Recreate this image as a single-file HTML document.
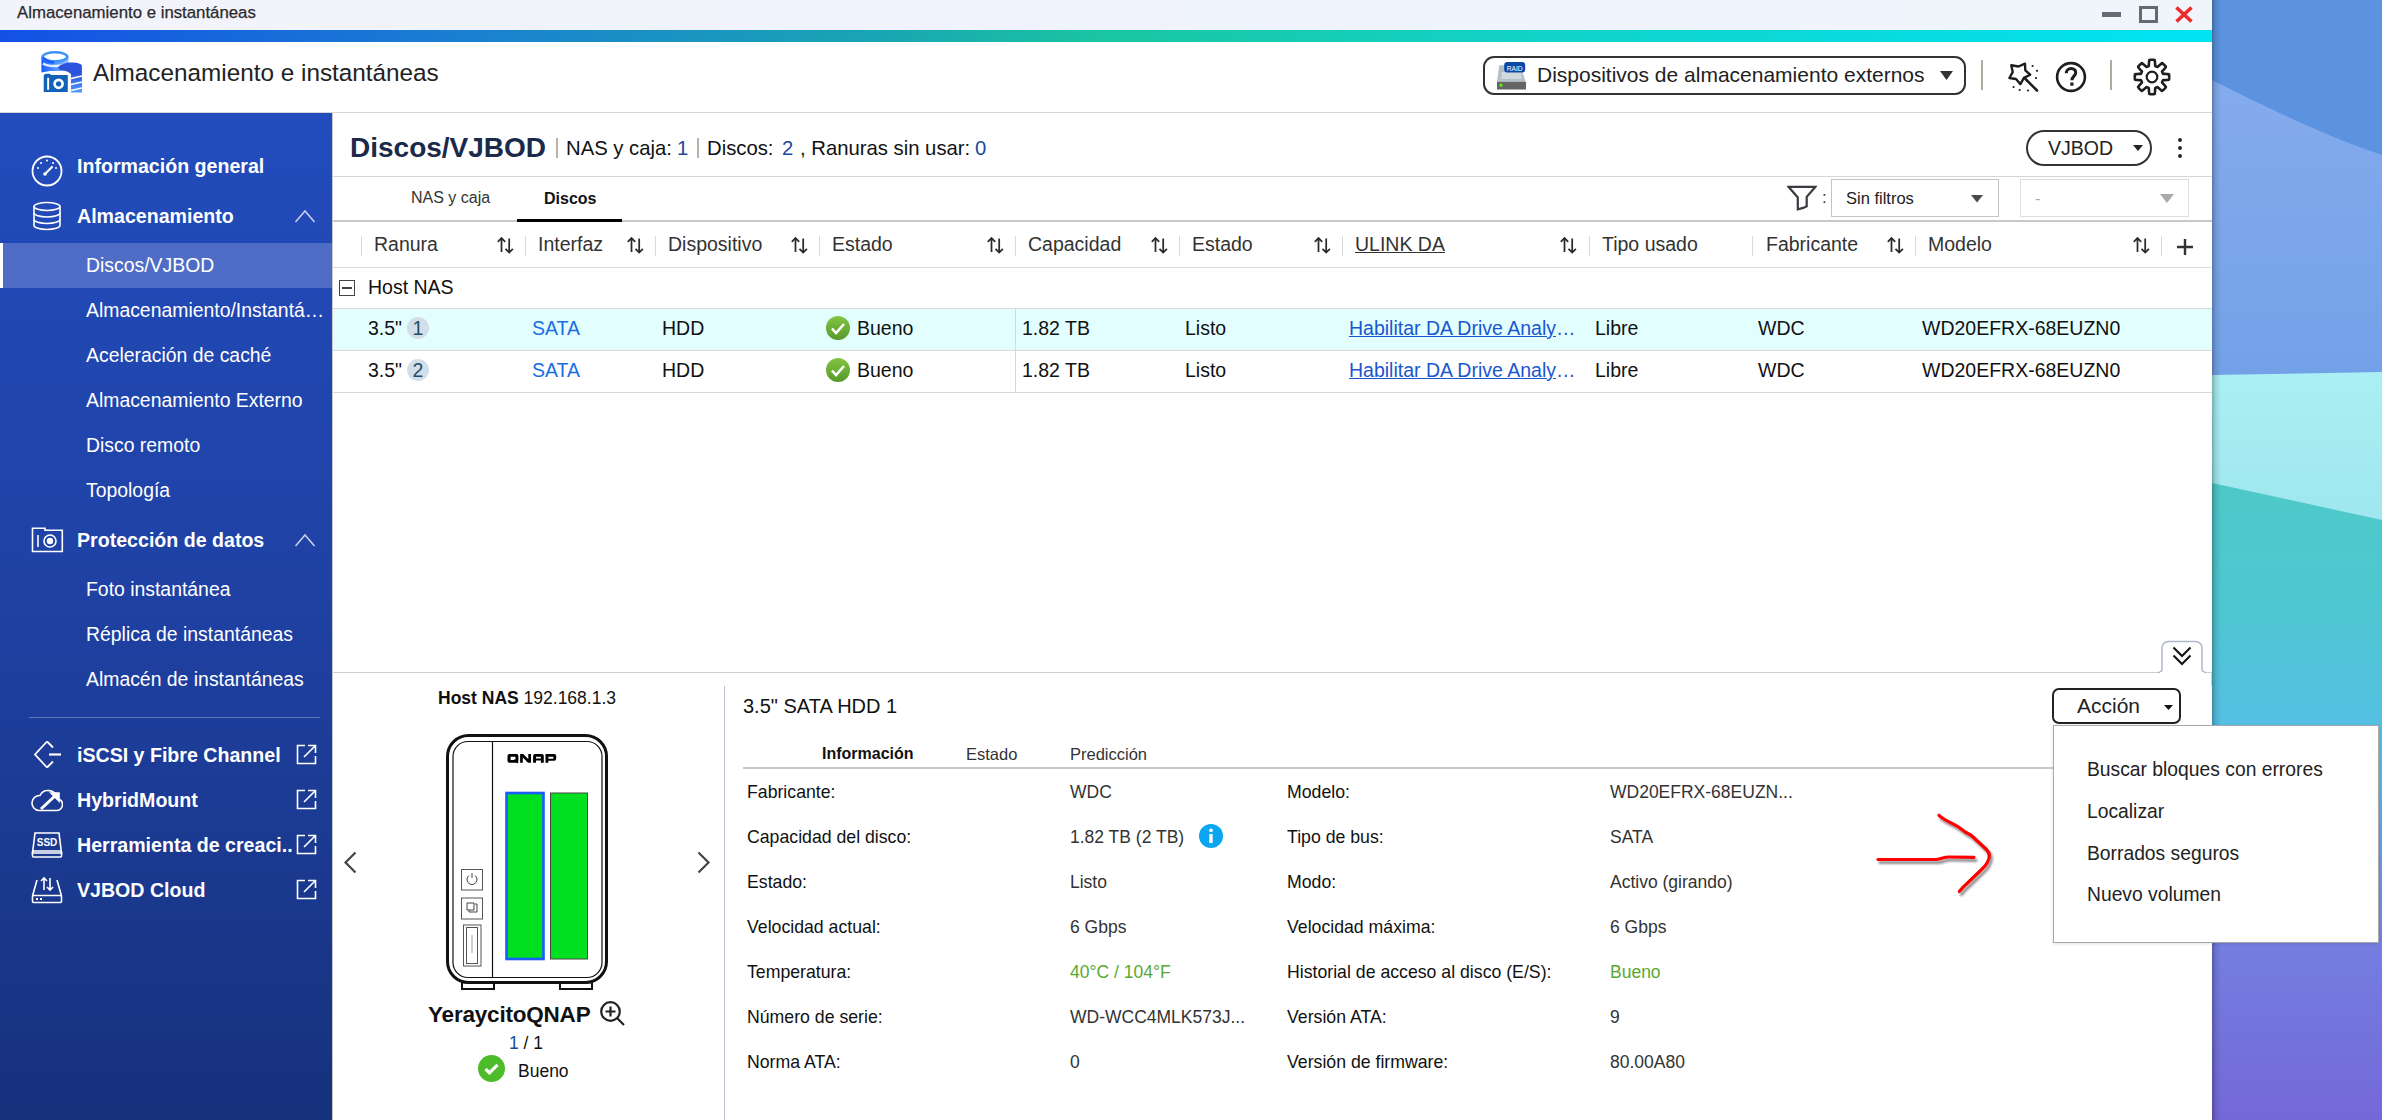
<!DOCTYPE html>
<html><head><meta charset="utf-8">
<style>
*{margin:0;padding:0;box-sizing:border-box}
html,body{width:2382px;height:1120px;overflow:hidden;font-family:"Liberation Sans",sans-serif;color:#222}
body{position:relative;background:#5b93e0}
.a{position:absolute}
.t{position:absolute;white-space:nowrap}
#wall{left:2212px;top:0;width:170px;height:1120px;overflow:hidden}
#win{left:0;top:0;width:2212px;height:1120px;background:#fff;overflow:hidden}
#titlebar{left:0;top:0;width:2212px;height:30px;background:linear-gradient(90deg,#f3f3fb 0%,#eff3fb 60%,#f0f5fc 100%)}
#grad{left:0;top:30px;width:2212px;height:12px;background:linear-gradient(90deg,#1450e6 0%,#1a82d0 22%,#19a6b2 40%,#1ac6a2 50%,#12d2c6 68%,#00e3f3 100%)}
#header{left:0;top:42px;width:2212px;height:71px;background:#fff;border-bottom:1px solid #d6d6d6}
#side{left:0;top:113px;width:332px;height:1007px;background:linear-gradient(180deg,#224cbd 0%,#1f41a3 48%,#16317c 100%)}
.sb{color:#fff;font-weight:bold;font-size:19.6px;line-height:30px}
.si{color:#fff;font-size:19.4px;line-height:30px}
.ln{position:absolute;background:#dcdcdc}
</style></head><body>
<div id="wall" class="a">
  <svg width="170" height="1120" viewBox="0 0 170 1120" style="position:absolute;left:0;top:0">
    <defs>
      <linearGradient id="wg" gradientUnits="userSpaceOnUse" x1="0" y1="480" x2="0" y2="1120">
        <stop offset="0" stop-color="#4ec9c8"/>
        <stop offset="0.2" stop-color="#4fc7d2"/>
        <stop offset="0.38" stop-color="#55c0e3"/>
        <stop offset="0.72" stop-color="#747fe0"/>
        <stop offset="1" stop-color="#7468d8"/>
      </linearGradient>
      <linearGradient id="wb" gradientUnits="userSpaceOnUse" x1="0" y1="80" x2="0" y2="375"><stop offset="0" stop-color="#84abed"/><stop offset="1" stop-color="#73a1e8"/></linearGradient>
      <linearGradient id="wc" gradientUnits="userSpaceOnUse" x1="0" y1="375" x2="0" y2="520"><stop offset="0" stop-color="#aaeff3"/><stop offset="1" stop-color="#9fe6ee"/></linearGradient>
    </defs>
    <rect x="0" y="0" width="170" height="1120" fill="url(#wg)"/>
    <polygon points="0,0 170,0 170,520 0,483" fill="url(#wc)"/>
    <polygon points="0,0 170,0 170,372 0,375" fill="url(#wb)"/>
    <path d="M0 0H170V155C110 135 50 105 0 80z" fill="#5b93e0"/>
  </svg>
</div>
<div class="a" style="left:2212px;top:0;width:9px;height:1120px;background:linear-gradient(90deg,rgba(0,0,0,.28),rgba(0,0,0,.1) 40%,rgba(0,0,0,0))"></div>
<div id="win" class="a">
  <div id="titlebar" class="a"></div>
  <div class="t" style="left:17px;top:3px;font-size:16.8px;line-height:20px;color:#2a2a2a;-webkit-text-stroke:0.25px #2a2a2a">Almacenamiento e instantáneas</div>
  <div id="grad" class="a"></div>
  <div id="header" class="a"></div>
  <div class="t" style="left:93px;top:58px;font-size:24.3px;line-height:30px;color:#222">Almacenamiento e instantáneas</div>

  <!-- window controls -->
  <div class="a" style="left:2102px;top:12px;width:19px;height:5px;background:#646a72"></div>
  <div class="a" style="left:2139px;top:6px;width:19px;height:17px;border:3.5px solid #646a72"></div>
  <svg class="a" style="left:2174px;top:5px" width="20" height="19" viewBox="0 0 20 19"><path d="M2.5 2.5l15 14M17.5 2.5l-15 14" stroke="#ee2b2b" stroke-width="3.6"/></svg>
  <!-- logo -->
  <svg class="a" style="left:40px;top:50px" width="44" height="44" viewBox="0 0 44 44">
    <defs>
      <linearGradient id="lg2" x1="0" y1="0" x2="0" y2="1"><stop offset="0" stop-color="#2a55e0"/><stop offset="1" stop-color="#4d9bff"/></linearGradient>
      <linearGradient id="lg3" x1="0" y1="0" x2="1" y2="0"><stop offset="0" stop-color="#1a5cff"/><stop offset="0.6" stop-color="#5a9cff"/><stop offset="1" stop-color="#9cc4ff"/></linearGradient>
    </defs>
    <path d="M1.4 6.8V22.5L10 21l18.5 0V6.8z" fill="url(#lg3)"/>
    <path d="M3 13.5c5 3.2 18 3.4 25 0.5" stroke="#fff" stroke-width="2.6" fill="none" opacity=".85"/>
    <ellipse cx="15" cy="6.8" rx="12.3" ry="4.5" fill="#fff" stroke="#3d94ff" stroke-width="2.6"/>
    <path d="M2.7 7.5C6 10 9 13 14 12.2" stroke="#1a5cff" stroke-width="2.4" fill="none"/>
    <path d="M31 23.5v19h11v-19z" fill="url(#lg2)"/>
    <path d="M31 28.5l11-2.5M31 34.5l11-2.5M31 40.5l11-2.5" stroke="#fff" stroke-width="1.4" fill="none"/>
    <path d="M17.7 18c2-3.5 8-5.4 14-5.4s10 1.5 10.2 3.2V23.7c-3 0.8-6 1-10.7 0.5C28 21 24 20 20 20z" fill="#2d52dc"/>
    <path d="M2.9 26a3 3 0 0 1 3-3h3.5a2 2 0 0 1 2 1.2h16.2a1 1 0 0 1 1 1v17.6H2.9z" fill="#1262b8" stroke="#fff" stroke-width="1.6"/>
    <rect x="7.2" y="27.8" width="1.9" height="12" fill="#fff"/>
    <circle cx="18.6" cy="33.8" r="4" fill="none" stroke="#fff" stroke-width="2.7"/>
  </svg>
  <!-- header dropdown -->
  <div class="a" style="left:1483px;top:56px;width:483px;height:39px;border:2px solid #333;border-radius:11px"></div>
  <svg class="a" style="left:1496px;top:61px" width="32" height="29" viewBox="0 0 32 29">
    <path d="M3.2 4.2h20.8l5.8 16.8H1z" fill="#b3bfc7"/>
    <path d="M5.9 10.9h18.9l1 7.1H5z" fill="#d0d8de"/>
    <rect x="1" y="20.9" width="29" height="7.6" fill="#646464"/>
    <rect x="3.7" y="22.8" width="2.6" height="2.8" fill="#66ff00"/>
    <rect x="8.2" y="1" width="21" height="10.6" rx="3" fill="#0a4aa6"/>
    <text x="18.7" y="9.6" font-family="Liberation Sans" font-size="8" fill="#fff" text-anchor="middle" textLength="16" lengthAdjust="spacingAndGlyphs">RAID</text>
  </svg>
  <div class="t" style="left:1537px;top:59.5px;font-size:21px;line-height:30px;color:#222">Dispositivos de almacenamiento externos</div>
  <svg class="a" style="left:1940px;top:71px" width="13" height="9" viewBox="0 0 13 9"><path d="M0 0h13L6.5 9z" fill="#333"/></svg>
  <div class="a" style="left:1981px;top:60px;width:2px;height:30px;background:#b1ab9f"></div>
  <div class="a" style="left:2110px;top:60px;width:2px;height:30px;background:#b1ab9f"></div>
  <!-- wand -->
  <svg class="a" style="left:2005px;top:59px" width="36" height="36" viewBox="0 0 36 36" fill="none" stroke="#1e1e1e" stroke-width="2.4" stroke-linejoin="round">
    <path d="M6.3 6.2 L13.5 7.5 L20.0 4.7 L20.3 11.3 L25.2 15.7 L18.9 18.9 L15.4 25.1 L11.0 20.0 L4.4 19.0 L7.7 13.1z"/>
    <path d="M20 19.5l12 12" stroke-linecap="round" stroke-width="2.6"/>
    <circle cx="27.6" cy="7" r="1.1" fill="#1e1e1e" stroke="none"/><circle cx="32" cy="11.8" r="1.1" fill="#1e1e1e" stroke="none"/><circle cx="31" cy="19" r="1.1" fill="#1e1e1e" stroke="none"/>
    <circle cx="8.6" cy="28" r="1.1" fill="#1e1e1e" stroke="none"/><circle cx="14.7" cy="31" r="1.1" fill="#1e1e1e" stroke="none"/><circle cx="23" cy="31.5" r="1.1" fill="#1e1e1e" stroke="none"/>
  </svg>
  <!-- help -->
  <svg class="a" style="left:2055px;top:61px" width="32" height="32" viewBox="0 0 32 32" fill="none" stroke="#1e1e1e" stroke-width="2.6">
    <circle cx="16" cy="16" r="13.9"/>
    <path d="M11.3 12.3c0-3 2.2-4.8 4.8-4.8 2.8 0 4.6 1.8 4.6 4.2 0 3.3-3.8 3.6-3.8 7.6" stroke-width="3"/>
    <rect x="15.3" y="21.5" width="3.2" height="3.2" fill="#1e1e1e" stroke="none"/>
  </svg>
  <!-- gear -->
  <svg class="a" style="left:2133px;top:58px" width="38" height="38" viewBox="0 0 38 38" fill="none" stroke="#1e1e1e" stroke-width="2.6" stroke-linejoin="round">
    <path d="M36.20 19.00 L36.19 19.45 L36.18 19.90 L36.15 20.35 L36.11 20.80 L36.05 21.25 L35.99 21.69 L34.66 21.90 L33.27 22.03 L31.92 22.10 L30.66 22.12 L29.93 22.24 L29.84 22.52 L29.75 22.81 L29.64 23.09 L29.53 23.36 L29.41 23.64 L29.29 23.91 L29.16 24.18 L29.02 24.44 L29.45 25.03 L30.33 25.94 L31.24 26.95 L32.12 28.02 L32.92 29.11 L32.65 29.47 L32.37 29.82 L32.08 30.17 L31.78 30.51 L31.48 30.84 L31.16 31.16 L30.84 31.48 L30.51 31.78 L30.17 32.08 L29.82 32.37 L29.47 32.65 L29.11 32.92 L28.02 32.12 L26.95 31.24 L25.94 30.33 L25.03 29.45 L24.44 29.02 L24.18 29.16 L23.91 29.29 L23.64 29.41 L23.36 29.53 L23.09 29.64 L22.81 29.75 L22.52 29.84 L22.24 29.93 L22.12 30.66 L22.10 31.92 L22.03 33.27 L21.90 34.66 L21.69 35.99 L21.25 36.05 L20.80 36.11 L20.35 36.15 L19.90 36.18 L19.45 36.19 L19.00 36.20 L18.55 36.19 L18.10 36.18 L17.65 36.15 L17.20 36.11 L16.75 36.05 L16.31 35.99 L16.10 34.66 L15.97 33.27 L15.90 31.92 L15.88 30.66 L15.76 29.93 L15.48 29.84 L15.19 29.75 L14.91 29.64 L14.64 29.53 L14.36 29.41 L14.09 29.29 L13.82 29.16 L13.56 29.02 L12.97 29.45 L12.06 30.33 L11.05 31.24 L9.98 32.12 L8.89 32.92 L8.53 32.65 L8.18 32.37 L7.83 32.08 L7.49 31.78 L7.16 31.48 L6.84 31.16 L6.52 30.84 L6.22 30.51 L5.92 30.17 L5.63 29.82 L5.35 29.47 L5.08 29.11 L5.88 28.02 L6.76 26.95 L7.67 25.94 L8.55 25.03 L8.98 24.44 L8.84 24.18 L8.71 23.91 L8.59 23.64 L8.47 23.36 L8.36 23.09 L8.25 22.81 L8.16 22.52 L8.07 22.24 L7.34 22.12 L6.08 22.10 L4.73 22.03 L3.34 21.90 L2.01 21.69 L1.95 21.25 L1.89 20.80 L1.85 20.35 L1.82 19.90 L1.81 19.45 L1.80 19.00 L1.81 18.55 L1.82 18.10 L1.85 17.65 L1.89 17.20 L1.95 16.75 L2.01 16.31 L3.34 16.10 L4.73 15.97 L6.08 15.90 L7.34 15.88 L8.07 15.76 L8.16 15.48 L8.25 15.19 L8.36 14.91 L8.47 14.64 L8.59 14.36 L8.71 14.09 L8.84 13.82 L8.98 13.56 L8.55 12.97 L7.67 12.06 L6.76 11.05 L5.88 9.98 L5.08 8.89 L5.35 8.53 L5.63 8.18 L5.92 7.83 L6.22 7.49 L6.52 7.16 L6.84 6.84 L7.16 6.52 L7.49 6.22 L7.83 5.92 L8.18 5.63 L8.53 5.35 L8.89 5.08 L9.98 5.88 L11.05 6.76 L12.06 7.67 L12.97 8.55 L13.56 8.98 L13.82 8.84 L14.09 8.71 L14.36 8.59 L14.64 8.47 L14.91 8.36 L15.19 8.25 L15.48 8.16 L15.76 8.07 L15.88 7.34 L15.90 6.08 L15.97 4.73 L16.10 3.34 L16.31 2.01 L16.75 1.95 L17.20 1.89 L17.65 1.85 L18.10 1.82 L18.55 1.81 L19.00 1.80 L19.45 1.81 L19.90 1.82 L20.35 1.85 L20.80 1.89 L21.25 1.95 L21.69 2.01 L21.90 3.34 L22.03 4.73 L22.10 6.08 L22.12 7.34 L22.24 8.07 L22.52 8.16 L22.81 8.25 L23.09 8.36 L23.36 8.47 L23.64 8.59 L23.91 8.71 L24.18 8.84 L24.44 8.98 L25.03 8.55 L25.94 7.67 L26.95 6.76 L28.02 5.88 L29.11 5.08 L29.47 5.35 L29.82 5.63 L30.17 5.92 L30.51 6.22 L30.84 6.52 L31.16 6.84 L31.48 7.16 L31.78 7.49 L32.08 7.83 L32.37 8.18 L32.65 8.53 L32.92 8.89 L32.12 9.98 L31.24 11.05 L30.33 12.06 L29.45 12.97 L29.02 13.56 L29.16 13.82 L29.29 14.09 L29.41 14.36 L29.53 14.64 L29.64 14.91 L29.75 15.19 L29.84 15.48 L29.93 15.76 L30.66 15.88 L31.92 15.90 L33.27 15.97 L34.66 16.10 L35.99 16.31 L36.05 16.75 L36.11 17.20 L36.15 17.65 L36.18 18.10 L36.19 18.55 L36.20 19.00Z"/>
    <circle cx="19" cy="19" r="5.3" stroke-width="2.2"/>
  </svg>
  <div id="side" class="a"></div>

  <div class="a" style="left:0;top:243px;width:332px;height:45px;background:#4f6dc6"></div>
  <div class="a" style="left:0;top:243px;width:3px;height:45px;background:#fff"></div>
  <!-- icons -->
  <svg class="a" style="left:30px;top:154px" width="34" height="34" viewBox="0 0 34 34" fill="none" stroke="#fff" stroke-width="1.8">
    <circle cx="17" cy="17" r="14.5"/>
    <line x1="15" y1="20" x2="22" y2="13" stroke-width="2.2" stroke-linecap="round"/>
    <circle cx="15" cy="20" r="1.8" fill="#fff" stroke="none"/>
    <circle cx="8" cy="14" r="1" fill="#fff" stroke="none"/><circle cx="11" cy="9" r="1" fill="#fff" stroke="none"/><circle cx="17" cy="6.5" r="1" fill="#fff" stroke="none"/><circle cx="23" cy="9" r="1" fill="#fff" stroke="none"/><circle cx="26" cy="14" r="1" fill="#fff" stroke="none"/>
  </svg>
  <svg class="a" style="left:32px;top:201px" width="30" height="30" viewBox="0 0 30 30" fill="none" stroke="#fff" stroke-width="1.6">
    <ellipse cx="15" cy="5.5" rx="13" ry="4"/>
    <path d="M2 5.5v19c0 2.2 5.8 4 13 4s13-1.8 13-4v-19"/>
    <path d="M2 12c0 2.2 5.8 4 13 4s13-1.8 13-4"/>
    <path d="M2 18.5c0 2.2 5.8 4 13 4s13-1.8 13-4"/>
  </svg>
  <svg class="a" style="left:294px;top:208px" width="22" height="16" viewBox="0 0 22 16" fill="none" stroke="rgba(255,255,255,.75)" stroke-width="1.6"><path d="M1.5 14L11 3l9.5 11"/></svg>
  <svg class="a" style="left:31px;top:527px" width="33" height="26" viewBox="0 0 33 26" fill="none" stroke="#fff" stroke-width="1.6">
    <path d="M1.5 2.5V1.2h12.5v2h17.3v21.3H1.5z"/>
    <line x1="7" y1="8" x2="7" y2="20"/>
    <circle cx="19" cy="14" r="6"/><circle cx="19" cy="14" r="2.4" fill="#fff"/>
  </svg>
  <svg class="a" style="left:294px;top:532px" width="22" height="16" viewBox="0 0 22 16" fill="none" stroke="rgba(255,255,255,.75)" stroke-width="1.6"><path d="M1.5 14L11 3l9.5 11"/></svg>
  <div class="a" style="left:29px;top:717px;width:291px;height:1px;background:rgba(255,255,255,.3)"></div>
  <svg class="a" style="left:33px;top:740px" width="30" height="29" viewBox="0 0 30 29" fill="none" stroke="#fff" stroke-width="1.8">
    <path d="M14 1.5L2 14.5l12 13"/><path d="M14 1.5l6 6"/><path d="M14 27.5l6-6"/><line x1="16" y1="14.5" x2="28" y2="14.5" stroke-width="2.2"/>
  </svg>
  <svg class="a" style="left:31px;top:787px" width="32" height="25" viewBox="0 0 32 25" fill="none" stroke="#fff" stroke-width="1.6">
    <path d="M8 23.5h17a6 6 0 0 0 1-12 9 9 0 0 0-17-3 7.5 7.5 0 0 0-1 15z"/>
    <path d="M10 22l16-15" stroke-width="3"/><path d="M20 6h8v8z" fill="#fff"/>
  </svg>
  <svg class="a" style="left:31px;top:831px" width="32" height="28" viewBox="0 0 32 28" fill="none" stroke="#fff" stroke-width="1.6">
    <path d="M4 2h24l2.5 20H1.5z"/><rect x="1.5" y="20" width="29" height="6" rx="1"/>
    <text x="16" y="15" font-family="Liberation Sans" font-weight="bold" font-size="10" fill="#fff" stroke="none" text-anchor="middle">SSD</text>
  </svg>
  <svg class="a" style="left:31px;top:876px" width="32" height="28" viewBox="0 0 32 28" fill="none" stroke="#fff" stroke-width="1.6">
    <path d="M6 4L1.5 20M26 4l4.5 16"/><rect x="1.5" y="19.5" width="29" height="7" rx="1"/>
    <path d="M13 14V2M10 5l3-3 3 3M19 2v12M16 11l3 3 3-3"/>
    <rect x="5" y="22" width="2" height="2" fill="#fff" stroke="none"/><rect x="9" y="22" width="2" height="2" fill="#fff" stroke="none"/>
  </svg>
  <svg class="a" style="left:296px;top:744px" width="21" height="21" viewBox="0 0 21 21" fill="none" stroke="#fff" stroke-width="1.6"><path d="M9 1.5H1.5v18h18V12"/><path d="M8 13L19 2M12 1.5h7.5V9"/></svg>
  <svg class="a" style="left:296px;top:789px" width="21" height="21" viewBox="0 0 21 21" fill="none" stroke="#fff" stroke-width="1.6"><path d="M9 1.5H1.5v18h18V12"/><path d="M8 13L19 2M12 1.5h7.5V9"/></svg>
  <svg class="a" style="left:296px;top:834px" width="21" height="21" viewBox="0 0 21 21" fill="none" stroke="#fff" stroke-width="1.6"><path d="M9 1.5H1.5v18h18V12"/><path d="M8 13L19 2M12 1.5h7.5V9"/></svg>
  <svg class="a" style="left:296px;top:879px" width="21" height="21" viewBox="0 0 21 21" fill="none" stroke="#fff" stroke-width="1.6"><path d="M9 1.5H1.5v18h18V12"/><path d="M8 13L19 2M12 1.5h7.5V9"/></svg>
  <div class="t sb" style="left:77px;top:150.7px">Información general</div>
  <div class="t sb" style="left:77px;top:200.7px">Almacenamiento</div>
  <div class="t si" style="left:86px;top:249.8px">Discos/VJBOD</div>
  <div class="t si" style="left:86px;top:294.8px">Almacenamiento/Instantá…</div>
  <div class="t si" style="left:86px;top:339.8px">Aceleración de caché</div>
  <div class="t si" style="left:86px;top:384.8px">Almacenamiento Externo</div>
  <div class="t si" style="left:86px;top:429.8px">Disco remoto</div>
  <div class="t si" style="left:86px;top:474.8px">Topología</div>
  <div class="t sb" style="left:77px;top:524.7px">Protección de datos</div>
  <div class="t si" style="left:86px;top:573.5px">Foto instantánea</div>
  <div class="t si" style="left:86px;top:618.5px">Réplica de instantáneas</div>
  <div class="t si" style="left:86px;top:663.5px">Almacén de instantáneas</div>
  <div class="t sb" style="left:77px;top:739.8px">iSCSI y Fibre Channel</div>
  <div class="t sb" style="left:77px;top:784.8px">HybridMount</div>
  <div class="t sb" style="left:77px;top:829.8px">Herramienta de creaci..</div>
  <div class="t sb" style="left:77px;top:874.8px">VJBOD Cloud</div>

  <!-- content -->
  <div class="a" style="left:332px;top:113px;width:1px;height:1007px;background:#c9c9c9"></div>
  <div class="t" style="left:350px;top:132px;font-size:28px;line-height:32px;font-weight:bold;color:#1b2a4a">Discos/VJBOD</div>
  <div class="a" style="left:556px;top:138px;width:2px;height:20px;background:#bab3a6"></div>
  <div class="t" style="left:566px;top:133px;font-size:20.3px;line-height:30px;color:#111">NAS y caja:</div>
  <div class="t" style="left:677px;top:133px;font-size:20.3px;line-height:30px;color:#1b4a9c">1</div>
  <div class="a" style="left:697px;top:138px;width:2px;height:20px;background:#bab3a6"></div>
  <div class="t" style="left:707px;top:133px;font-size:20.3px;line-height:30px;color:#111">Discos:</div>
  <div class="t" style="left:782px;top:133px;font-size:20.3px;line-height:30px;color:#1b4a9c">2</div>
  <div class="t" style="left:800px;top:133px;font-size:20.3px;line-height:30px;color:#111">, Ranuras sin usar:</div>
  <div class="t" style="left:975px;top:133px;font-size:20.3px;line-height:30px;color:#1b4a9c">0</div>
  <!-- VJBOD pill -->
  <div class="a" style="left:2026px;top:130px;width:126px;height:36px;border:2px solid #333;border-radius:18px"></div>
  <div class="t" style="left:2048px;top:133px;font-size:19.5px;line-height:30px;color:#222">VJBOD</div>
  <svg class="a" style="left:2133px;top:145px" width="10" height="6" viewBox="0 0 10 6"><path d="M0 0h10L5 6z" fill="#222"/></svg>
  <div class="a" style="left:2177.8px;top:137.6px;width:4.4px;height:4.4px;border-radius:2.2px;background:#2a2a2a"></div>
  <div class="a" style="left:2177.8px;top:145.7px;width:4.4px;height:4.4px;border-radius:2.2px;background:#2a2a2a"></div>
  <div class="a" style="left:2177.8px;top:153.7px;width:4.4px;height:4.4px;border-radius:2.2px;background:#2a2a2a"></div>
  <div class="a" style="left:333px;top:176px;width:1879px;height:1px;background:#d6d6d6"></div>
  <!-- tabs -->
  <div class="t" style="left:411px;top:188px;font-size:16px;line-height:20px;color:#333">NAS y caja</div>
  <div class="t" style="left:544px;top:189px;font-size:16px;line-height:20px;font-weight:bold;color:#111">Discos</div>
  <div class="a" style="left:333px;top:220px;width:1879px;height:2px;background:#c8c8c8"></div>
  <div class="a" style="left:517px;top:219px;width:105px;height:3px;background:#000"></div>
  <!-- filter -->
  <svg class="a" style="left:1787px;top:185px" width="30" height="26" viewBox="0 0 30 26" fill="none" stroke="#3a3a40" stroke-width="2.2" stroke-linejoin="miter"><path d="M1.5 1.8h27L19.7 11.8v9.5l-3.5 1.6-5.4 1.4V12.5z"/></svg>
  <div class="t" style="left:1822px;top:188px;font-size:17px;line-height:20px;color:#333">:</div>
  <div class="a" style="left:1831px;top:179px;width:168px;height:38px;border:1px solid #c4c4c4;background:#fff"></div>
  <div class="t" style="left:1846px;top:188px;font-size:16.5px;line-height:20px;color:#222">Sin filtros</div>
  <svg class="a" style="left:1971px;top:195px" width="12" height="8" viewBox="0 0 12 8"><path d="M0 0h12L6 7.5z" fill="#4a4a4a"/></svg>
  <div class="a" style="left:2020px;top:179px;width:169px;height:38px;border:1px solid #dedede;background:#fff"></div>
  <div class="t" style="left:2035px;top:188px;font-size:16.5px;line-height:20px;color:#aaa">-</div>
  <svg class="a" style="left:2160px;top:194px" width="14" height="9" viewBox="0 0 14 9"><path d="M0 0h14L7 9z" fill="#aaa"/></svg>
  <!-- table header -->
  <div class="a" style="left:361px;top:236px;width:1px;height:20px;background:#dadada"></div>
  <div class="a" style="left:525px;top:236px;width:1px;height:20px;background:#dadada"></div>
  <div class="a" style="left:655px;top:236px;width:1px;height:20px;background:#dadada"></div>
  <div class="a" style="left:819px;top:236px;width:1px;height:20px;background:#dadada"></div>
  <div class="a" style="left:1015px;top:236px;width:1px;height:20px;background:#dadada"></div>
  <div class="a" style="left:1179px;top:236px;width:1px;height:20px;background:#dadada"></div>
  <div class="a" style="left:1342px;top:236px;width:1px;height:20px;background:#dadada"></div>
  <div class="a" style="left:1589px;top:236px;width:1px;height:20px;background:#dadada"></div>
  <div class="a" style="left:1752px;top:236px;width:1px;height:20px;background:#dadada"></div>
  <div class="a" style="left:1915px;top:236px;width:1px;height:20px;background:#dadada"></div>
  <div class="a" style="left:2161px;top:236px;width:1px;height:20px;background:#dadada"></div>
  <div class="t" style="left:374px;top:230px;font-size:19.5px;line-height:28px;color:#333;">Ranura</div>
  <svg class="a" style="left:497px;top:237px" width="17" height="17" viewBox="0 0 17 17" fill="none" stroke="#2a2a2a" stroke-width="1.75"><path d="M4.5 15V1M0.8 4.8L4.5 1 8.2 4.8M12.2 1.5v14.5M8.5 11.8l3.7 3.7 3.7-3.7"/></svg>
  <div class="t" style="left:538px;top:230px;font-size:19.5px;line-height:28px;color:#333;">Interfaz</div>
  <svg class="a" style="left:627px;top:237px" width="17" height="17" viewBox="0 0 17 17" fill="none" stroke="#2a2a2a" stroke-width="1.75"><path d="M4.5 15V1M0.8 4.8L4.5 1 8.2 4.8M12.2 1.5v14.5M8.5 11.8l3.7 3.7 3.7-3.7"/></svg>
  <div class="t" style="left:668px;top:230px;font-size:19.5px;line-height:28px;color:#333;">Dispositivo</div>
  <svg class="a" style="left:791px;top:237px" width="17" height="17" viewBox="0 0 17 17" fill="none" stroke="#2a2a2a" stroke-width="1.75"><path d="M4.5 15V1M0.8 4.8L4.5 1 8.2 4.8M12.2 1.5v14.5M8.5 11.8l3.7 3.7 3.7-3.7"/></svg>
  <div class="t" style="left:832px;top:230px;font-size:19.5px;line-height:28px;color:#333;">Estado</div>
  <svg class="a" style="left:987px;top:237px" width="17" height="17" viewBox="0 0 17 17" fill="none" stroke="#2a2a2a" stroke-width="1.75"><path d="M4.5 15V1M0.8 4.8L4.5 1 8.2 4.8M12.2 1.5v14.5M8.5 11.8l3.7 3.7 3.7-3.7"/></svg>
  <div class="t" style="left:1028px;top:230px;font-size:19.5px;line-height:28px;color:#333;">Capacidad</div>
  <svg class="a" style="left:1151px;top:237px" width="17" height="17" viewBox="0 0 17 17" fill="none" stroke="#2a2a2a" stroke-width="1.75"><path d="M4.5 15V1M0.8 4.8L4.5 1 8.2 4.8M12.2 1.5v14.5M8.5 11.8l3.7 3.7 3.7-3.7"/></svg>
  <div class="t" style="left:1192px;top:230px;font-size:19.5px;line-height:28px;color:#333;">Estado</div>
  <svg class="a" style="left:1314px;top:237px" width="17" height="17" viewBox="0 0 17 17" fill="none" stroke="#2a2a2a" stroke-width="1.75"><path d="M4.5 15V1M0.8 4.8L4.5 1 8.2 4.8M12.2 1.5v14.5M8.5 11.8l3.7 3.7 3.7-3.7"/></svg>
  <div class="t" style="left:1355px;top:230px;font-size:19.5px;line-height:28px;color:#333;text-decoration:underline;">ULINK DA</div>
  <svg class="a" style="left:1560px;top:237px" width="17" height="17" viewBox="0 0 17 17" fill="none" stroke="#2a2a2a" stroke-width="1.75"><path d="M4.5 15V1M0.8 4.8L4.5 1 8.2 4.8M12.2 1.5v14.5M8.5 11.8l3.7 3.7 3.7-3.7"/></svg>
  <div class="t" style="left:1602px;top:230px;font-size:19.5px;line-height:28px;color:#333;">Tipo usado</div>
  <div class="t" style="left:1766px;top:230px;font-size:19.5px;line-height:28px;color:#333;">Fabricante</div>
  <svg class="a" style="left:1887px;top:237px" width="17" height="17" viewBox="0 0 17 17" fill="none" stroke="#2a2a2a" stroke-width="1.75"><path d="M4.5 15V1M0.8 4.8L4.5 1 8.2 4.8M12.2 1.5v14.5M8.5 11.8l3.7 3.7 3.7-3.7"/></svg>
  <div class="t" style="left:1928px;top:230px;font-size:19.5px;line-height:28px;color:#333;">Modelo</div>
  <svg class="a" style="left:2133px;top:237px" width="17" height="17" viewBox="0 0 17 17" fill="none" stroke="#2a2a2a" stroke-width="1.75"><path d="M4.5 15V1M0.8 4.8L4.5 1 8.2 4.8M12.2 1.5v14.5M8.5 11.8l3.7 3.7 3.7-3.7"/></svg>
  <svg class="a" style="left:2177px;top:239px" width="16" height="16" viewBox="0 0 16 16" stroke="#333" stroke-width="2.4"><path d="M8 0v16M0 8h16"/></svg>
  <div class="a" style="left:333px;top:267px;width:1879px;height:1px;background:#dcdcdc"></div>
  <!-- group row -->
  <div class="a" style="left:339px;top:280px;width:16px;height:16px;border:1.5px solid #444"></div>
  <div class="a" style="left:342px;top:287px;width:10px;height:1.5px;background:#444"></div>
  <div class="t" style="left:368px;top:273px;font-size:19.5px;line-height:28px;color:#111">Host NAS</div>
  <div class="a" style="left:333px;top:308px;width:1879px;height:1px;background:#d8d8d8"></div>
  <div class="a" style="left:333px;top:309px;width:1879px;height:41px;background:#e3fefe"></div>
  <div class="a" style="left:333px;top:350px;width:1879px;height:1px;background:#d8d8d8"></div>
  <div class="a" style="left:333px;top:392px;width:1879px;height:1px;background:#d8d8d8"></div>
  <div class="a" style="left:1015px;top:309px;width:1px;height:83px;background:#d8d8d8"></div>
  <div class="t" style="left:368px;top:314px;font-size:19.5px;line-height:28px;color:#111">3.5"</div>
  <div class="a" style="left:407px;top:317px;width:22px;height:22px;border-radius:11px;background:#d3dfe8"></div>
  <div class="t" style="left:407px;top:314px;width:22px;text-align:center;font-size:19.5px;line-height:28px;color:#1f4d6b">1</div>
  <div class="t" style="left:532px;top:314px;font-size:19.5px;line-height:28px;color:#1a6fe0">SATA</div>
  <div class="t" style="left:662px;top:314px;font-size:19.5px;line-height:28px;color:#111">HDD</div>
  <svg class="a" style="left:826px;top:316px" width="24" height="24" viewBox="0 0 24 24"><defs><linearGradient id="cg0" x1="0" y1="0" x2="0" y2="1"><stop offset="0" stop-color="#84c441"/><stop offset="1" stop-color="#559a2c"/></linearGradient></defs><circle cx="12" cy="12" r="12" fill="url(#cg0)"/><path d="M6 12.5l4 4.5 8-9" fill="none" stroke="#fff" stroke-width="2.6"/></svg>
  <div class="t" style="left:857px;top:314px;font-size:19.5px;line-height:28px;color:#111">Bueno</div>
  <div class="t" style="left:1022px;top:314px;font-size:19.5px;line-height:28px;color:#111">1.82 TB</div>
  <div class="t" style="left:1185px;top:314px;font-size:19.5px;line-height:28px;color:#111">Listo</div>
  <div class="t" style="left:1349px;top:314px;font-size:19.5px;line-height:28px;color:#1a56d0"><span style="text-decoration:underline">Habilitar DA Drive Analy</span>…</div>
  <div class="t" style="left:1595px;top:314px;font-size:19.5px;line-height:28px;color:#111">Libre</div>
  <div class="t" style="left:1758px;top:314px;font-size:19.5px;line-height:28px;color:#111">WDC</div>
  <div class="t" style="left:1922px;top:314px;font-size:19.5px;line-height:28px;color:#111">WD20EFRX-68EUZN0</div>
  <div class="t" style="left:368px;top:356px;font-size:19.5px;line-height:28px;color:#111">3.5"</div>
  <div class="a" style="left:407px;top:359px;width:22px;height:22px;border-radius:11px;background:#d3dfe8"></div>
  <div class="t" style="left:407px;top:356px;width:22px;text-align:center;font-size:19.5px;line-height:28px;color:#1f4d6b">2</div>
  <div class="t" style="left:532px;top:356px;font-size:19.5px;line-height:28px;color:#1a6fe0">SATA</div>
  <div class="t" style="left:662px;top:356px;font-size:19.5px;line-height:28px;color:#111">HDD</div>
  <svg class="a" style="left:826px;top:358px" width="24" height="24" viewBox="0 0 24 24"><defs><linearGradient id="cg1" x1="0" y1="0" x2="0" y2="1"><stop offset="0" stop-color="#84c441"/><stop offset="1" stop-color="#559a2c"/></linearGradient></defs><circle cx="12" cy="12" r="12" fill="url(#cg1)"/><path d="M6 12.5l4 4.5 8-9" fill="none" stroke="#fff" stroke-width="2.6"/></svg>
  <div class="t" style="left:857px;top:356px;font-size:19.5px;line-height:28px;color:#111">Bueno</div>
  <div class="t" style="left:1022px;top:356px;font-size:19.5px;line-height:28px;color:#111">1.82 TB</div>
  <div class="t" style="left:1185px;top:356px;font-size:19.5px;line-height:28px;color:#111">Listo</div>
  <div class="t" style="left:1349px;top:356px;font-size:19.5px;line-height:28px;color:#1a56d0"><span style="text-decoration:underline">Habilitar DA Drive Analy</span>…</div>
  <div class="t" style="left:1595px;top:356px;font-size:19.5px;line-height:28px;color:#111">Libre</div>
  <div class="t" style="left:1758px;top:356px;font-size:19.5px;line-height:28px;color:#111">WDC</div>
  <div class="t" style="left:1922px;top:356px;font-size:19.5px;line-height:28px;color:#111">WD20EFRX-68EUZN0</div>

  <!-- bottom panel -->
  <div class="a" style="left:333px;top:672px;width:1879px;height:1px;background:#cfcfcf"></div>
  <svg class="a" style="left:2158px;top:640px" width="48" height="34" viewBox="0 0 48 34" fill="#fff" stroke="#b1b7cc" stroke-width="1.5"><path d="M0 32.5c3 0 4-1 4-4V8a6.5 6.5 0 0 1 6.5-6.5h27A6.5 6.5 0 0 1 44 8v20.5c0 3 1 4 4 4"/></svg>
  <div class="a" style="left:2160px;top:672px;width:44px;height:2px;background:#fff"></div>
  <svg class="a" style="left:2172px;top:646px" width="20" height="20" viewBox="0 0 20 20" fill="none" stroke="#111" stroke-width="2"><path d="M1.5 1.5L10 10l8.5-8.5M1.5 9.5L10 18l8.5-8.5"/></svg>
  <div class="a" style="left:2211px;top:672px;width:1px;height:14px;background:#cfcfcf"></div>
  <div class="t" style="left:438px;top:687px;font-size:17.5px;line-height:22px;color:#111"><b>Host NAS</b> 192.168.1.3</div>
  <div class="a" style="left:724px;top:686px;width:1px;height:434px;background:#bcc0d0"></div>
  <svg class="a" style="left:343px;top:851px" width="15" height="23" viewBox="0 0 15 23" fill="none" stroke="#444" stroke-width="2.2"><path d="M12.5 1.5L2.5 11.5l10 10"/></svg>
  <svg class="a" style="left:696px;top:851px" width="15" height="23" viewBox="0 0 15 23" fill="none" stroke="#444" stroke-width="2.2"><path d="M2.5 1.5l10 10-10 10"/></svg>
  <!-- NAS -->
  <svg class="a" style="left:440px;top:728px" width="176" height="266" viewBox="440 728 176 266" fill="none" stroke="#111">
    <rect x="462" y="981" width="32" height="8" fill="#fff" stroke-width="2"/>
    <rect x="560" y="981" width="32" height="8" fill="#fff" stroke-width="2"/>
    <rect x="447.5" y="735.5" width="159" height="247" rx="21" fill="#fff" stroke-width="3"/>
    <rect x="453" y="741.5" width="149" height="236" rx="15" stroke-width="1.2"/>
    <line x1="492.5" y1="741.5" x2="492.5" y2="977.5" stroke-width="1.2"/>
    <path fill="#000" stroke="none" fill-rule="evenodd" d="M509.5 753.9h6.9a2 2 0 0 1 2 2v4.8a2 2 0 0 1-2 2h-6.9a2 2 0 0 1-2-2v-4.8a2 2 0 0 1 2-2zM510.6 756.8v3.1h4.9v-3.1z M520.1 753.9h3.1l5.1 5.1v-5.1h2.7v8.8h-3l-5.2-5.2v5.2h-2.7z M533.1 762.7V755.9a2 2 0 0 1 2-2h6.7a2 2 0 0 1 2 2v6.8h-2.9v-2.1h-4.9v2.1zM536 756.8v1.8h4.9v-1.8z M545.5 762.7V753.9h8.7a2 2 0 0 1 2 2v2.8a2 2 0 0 1-2 2h-5.9v2zM548.3 756.8v1.9h5v-1.9z"/>
    <path d="M514.5 759.5l3.5 3.3" stroke="#000" stroke-width="1.6"/>
    <rect x="506.5" y="793" width="37" height="166" fill="#00e020" stroke="#1a5cff" stroke-width="2.6"/>
    <rect x="550.5" y="793" width="37" height="166" fill="#00e020" stroke="#444" stroke-width="1"/>
    <rect x="461.5" y="869.5" width="21" height="20.5" stroke-width="1" stroke="#555"/>
    <path d="M469 875.5a5 5 0 1 0 6 0M472 873v5" stroke-width="1" stroke="#444"/>
    <rect x="461.5" y="898" width="21" height="21" stroke-width="1" stroke="#555"/>
    <path d="M467 903h7v7h-7zM469 910v2h8v-8h-2" stroke-width="1" stroke="#444"/>
    <rect x="463.5" y="925" width="17.5" height="41" stroke-width="1" stroke="#555"/>
    <rect x="466.5" y="927.5" width="11" height="36" stroke-width="1" stroke="#555"/>
    <path d="M472 935v18" stroke-width="0.8" stroke="#888"/>
  </svg>
  <div class="t" style="left:428px;top:1000px;font-size:22.5px;line-height:30px;font-weight:bold;color:#111;letter-spacing:-0.2px">YeraycitoQNAP</div>
  <svg class="a" style="left:599px;top:1000px" width="28" height="28" viewBox="0 0 28 28" fill="none" stroke="#222" stroke-width="2.2"><circle cx="11.5" cy="11.5" r="9.3"/><path d="M11.5 6.5v10M6.5 11.5h10M18.5 18.5l6.5 6.5"/></svg>
  <div class="t" style="left:509px;top:1032px;font-size:17.5px;line-height:22px;color:#111"><span style="color:#1b4a9c">1</span> / 1</div>
  <svg class="a" style="left:478px;top:1055px" width="27" height="27" viewBox="0 0 27 27"><circle cx="13.5" cy="13.5" r="13.5" fill="#4cbc2b"/><path d="M7.5 14l4 3.8 8-8" fill="none" stroke="#fff" stroke-width="3.2"/></svg>
  <div class="t" style="left:518px;top:1060px;font-size:17.5px;line-height:22px;color:#111">Bueno</div>
  <!-- details -->
  <div class="t" style="left:743px;top:692px;font-size:20px;line-height:28px;color:#111">3.5" SATA HDD 1</div>
  <div class="a" style="left:2052px;top:688px;width:129px;height:36px;border:2px solid #222;border-radius:7px"></div>
  <div class="t" style="left:2077px;top:692px;font-size:21px;line-height:28px;color:#222">Acción</div>
  <svg class="a" style="left:2164px;top:705px" width="9" height="5" viewBox="0 0 9 5"><path d="M0 0h9L4.5 5z" fill="#111"/></svg>
  <div class="t" style="left:822px;top:743.5px;font-size:16px;line-height:20px;font-weight:bold;color:#111">Información</div>
  <div class="t" style="left:966px;top:743.5px;font-size:16.5px;line-height:20px;color:#333">Estado</div>
  <div class="t" style="left:1070px;top:743.5px;font-size:16.5px;line-height:20px;color:#333">Predicción</div>
  <div class="a" style="left:743px;top:767px;width:1469px;height:2px;background:#c8c8c8"></div>
  <div class="t" style="left:747px;top:780.5px;font-size:17.7px;line-height:22px;color:#111">Fabricante:</div>
  <div class="t" style="left:1070px;top:780.5px;font-size:17.5px;line-height:22px;color:#333">WDC</div>
  <div class="t" style="left:1287px;top:780.5px;font-size:17.7px;line-height:22px;color:#111">Modelo:</div>
  <div class="t" style="left:1610px;top:780.5px;font-size:17.5px;line-height:22px;color:#333">WD20EFRX-68EUZN...</div>
  <div class="t" style="left:747px;top:825.5px;font-size:17.7px;line-height:22px;color:#111">Capacidad del disco:</div>
  <div class="t" style="left:1070px;top:825.5px;font-size:17.5px;line-height:22px;color:#333">1.82 TB (2 TB)</div>
  <div class="t" style="left:1287px;top:825.5px;font-size:17.7px;line-height:22px;color:#111">Tipo de bus:</div>
  <div class="t" style="left:1610px;top:825.5px;font-size:17.5px;line-height:22px;color:#333">SATA</div>
  <div class="t" style="left:747px;top:870.5px;font-size:17.7px;line-height:22px;color:#111">Estado:</div>
  <div class="t" style="left:1070px;top:870.5px;font-size:17.5px;line-height:22px;color:#333">Listo</div>
  <div class="t" style="left:1287px;top:870.5px;font-size:17.7px;line-height:22px;color:#111">Modo:</div>
  <div class="t" style="left:1610px;top:870.5px;font-size:17.5px;line-height:22px;color:#333">Activo (girando)</div>
  <div class="t" style="left:747px;top:915.5px;font-size:17.7px;line-height:22px;color:#111">Velocidad actual:</div>
  <div class="t" style="left:1070px;top:915.5px;font-size:17.5px;line-height:22px;color:#333">6 Gbps</div>
  <div class="t" style="left:1287px;top:915.5px;font-size:17.7px;line-height:22px;color:#111">Velocidad máxima:</div>
  <div class="t" style="left:1610px;top:915.5px;font-size:17.5px;line-height:22px;color:#333">6 Gbps</div>
  <div class="t" style="left:747px;top:960.5px;font-size:17.7px;line-height:22px;color:#111">Temperatura:</div>
  <div class="t" style="left:1070px;top:960.5px;font-size:17.5px;line-height:22px;color:#5aa832">40°C / 104°F</div>
  <div class="t" style="left:1287px;top:960.5px;font-size:17.7px;line-height:22px;color:#111">Historial de acceso al disco (E/S):</div>
  <div class="t" style="left:1610px;top:960.5px;font-size:17.5px;line-height:22px;color:#5aa832">Bueno</div>
  <div class="t" style="left:747px;top:1005.5px;font-size:17.7px;line-height:22px;color:#111">Número de serie:</div>
  <div class="t" style="left:1070px;top:1005.5px;font-size:17.5px;line-height:22px;color:#333">WD-WCC4MLK573J...</div>
  <div class="t" style="left:1287px;top:1005.5px;font-size:17.7px;line-height:22px;color:#111">Versión ATA:</div>
  <div class="t" style="left:1610px;top:1005.5px;font-size:17.5px;line-height:22px;color:#333">9</div>
  <div class="t" style="left:747px;top:1050.5px;font-size:17.7px;line-height:22px;color:#111">Norma ATA:</div>
  <div class="t" style="left:1070px;top:1050.5px;font-size:17.5px;line-height:22px;color:#333">0</div>
  <div class="t" style="left:1287px;top:1050.5px;font-size:17.7px;line-height:22px;color:#111">Versión de firmware:</div>
  <div class="t" style="left:1610px;top:1050.5px;font-size:17.5px;line-height:22px;color:#333">80.00A80</div>
  <svg class="a" style="left:1199px;top:824px" width="24" height="24" viewBox="0 0 24 24"><circle cx="12" cy="12" r="12" fill="#0aa6f2"/><rect x="10.3" y="10" width="3.4" height="9" fill="#fff"/><circle cx="12" cy="6.3" r="1.9" fill="#fff"/></svg>
  <!-- red arrow -->
  <svg class="a" style="left:1870px;top:808px" width="130" height="95" viewBox="1870 808 130 95" fill="none" stroke-linecap="round" stroke-linejoin="round">
    <defs><filter id="sh" x="-20%" y="-20%" width="140%" height="140%"><feGaussianBlur in="SourceAlpha" stdDeviation="1.3"/><feOffset dx="2" dy="3"/><feComponentTransfer><feFuncA type="linear" slope="0.45"/></feComponentTransfer><feMerge><feMergeNode/><feMergeNode in="SourceGraphic"/></feMerge></filter></defs>
    <g filter="url(#sh)" stroke="#ff0000" stroke-width="3.2">
      <path d="M1878 859.5L1936 859.5C1941 859.5 1943 857 1949 857L1974 857.3"/>
      <path d="M1939 815.3C1944 820 1950 822 1955 825C1960 827 1963 831 1966 832.5C1968 833.5 1970 834 1972 836L1986.5 849.5C1990 853 1990 858 1987 863C1985 867 1982 869 1980 871L1967 883.5C1964 886 1962 888 1959.3 891.5"/>
    </g>
  </svg>
</div>
  <!-- action menu -->
  <div class="a" style="left:2053px;top:725px;width:326px;height:218px;background:#fff;border:1px solid #a9a9a9;box-shadow:0 1px 3px rgba(0,0,0,.12)"></div>
  <div class="t" style="left:2087px;top:755.5px;font-size:19.3px;line-height:28px;color:#222">Buscar bloques con errores</div>
  <div class="t" style="left:2087px;top:797.8px;font-size:19.3px;line-height:28px;color:#222">Localizar</div>
  <div class="t" style="left:2087px;top:839.8px;font-size:19.3px;line-height:28px;color:#222">Borrados seguros</div>
  <div class="t" style="left:2087px;top:881.3px;font-size:19.3px;line-height:28px;color:#222">Nuevo volumen</div>
</body></html>
